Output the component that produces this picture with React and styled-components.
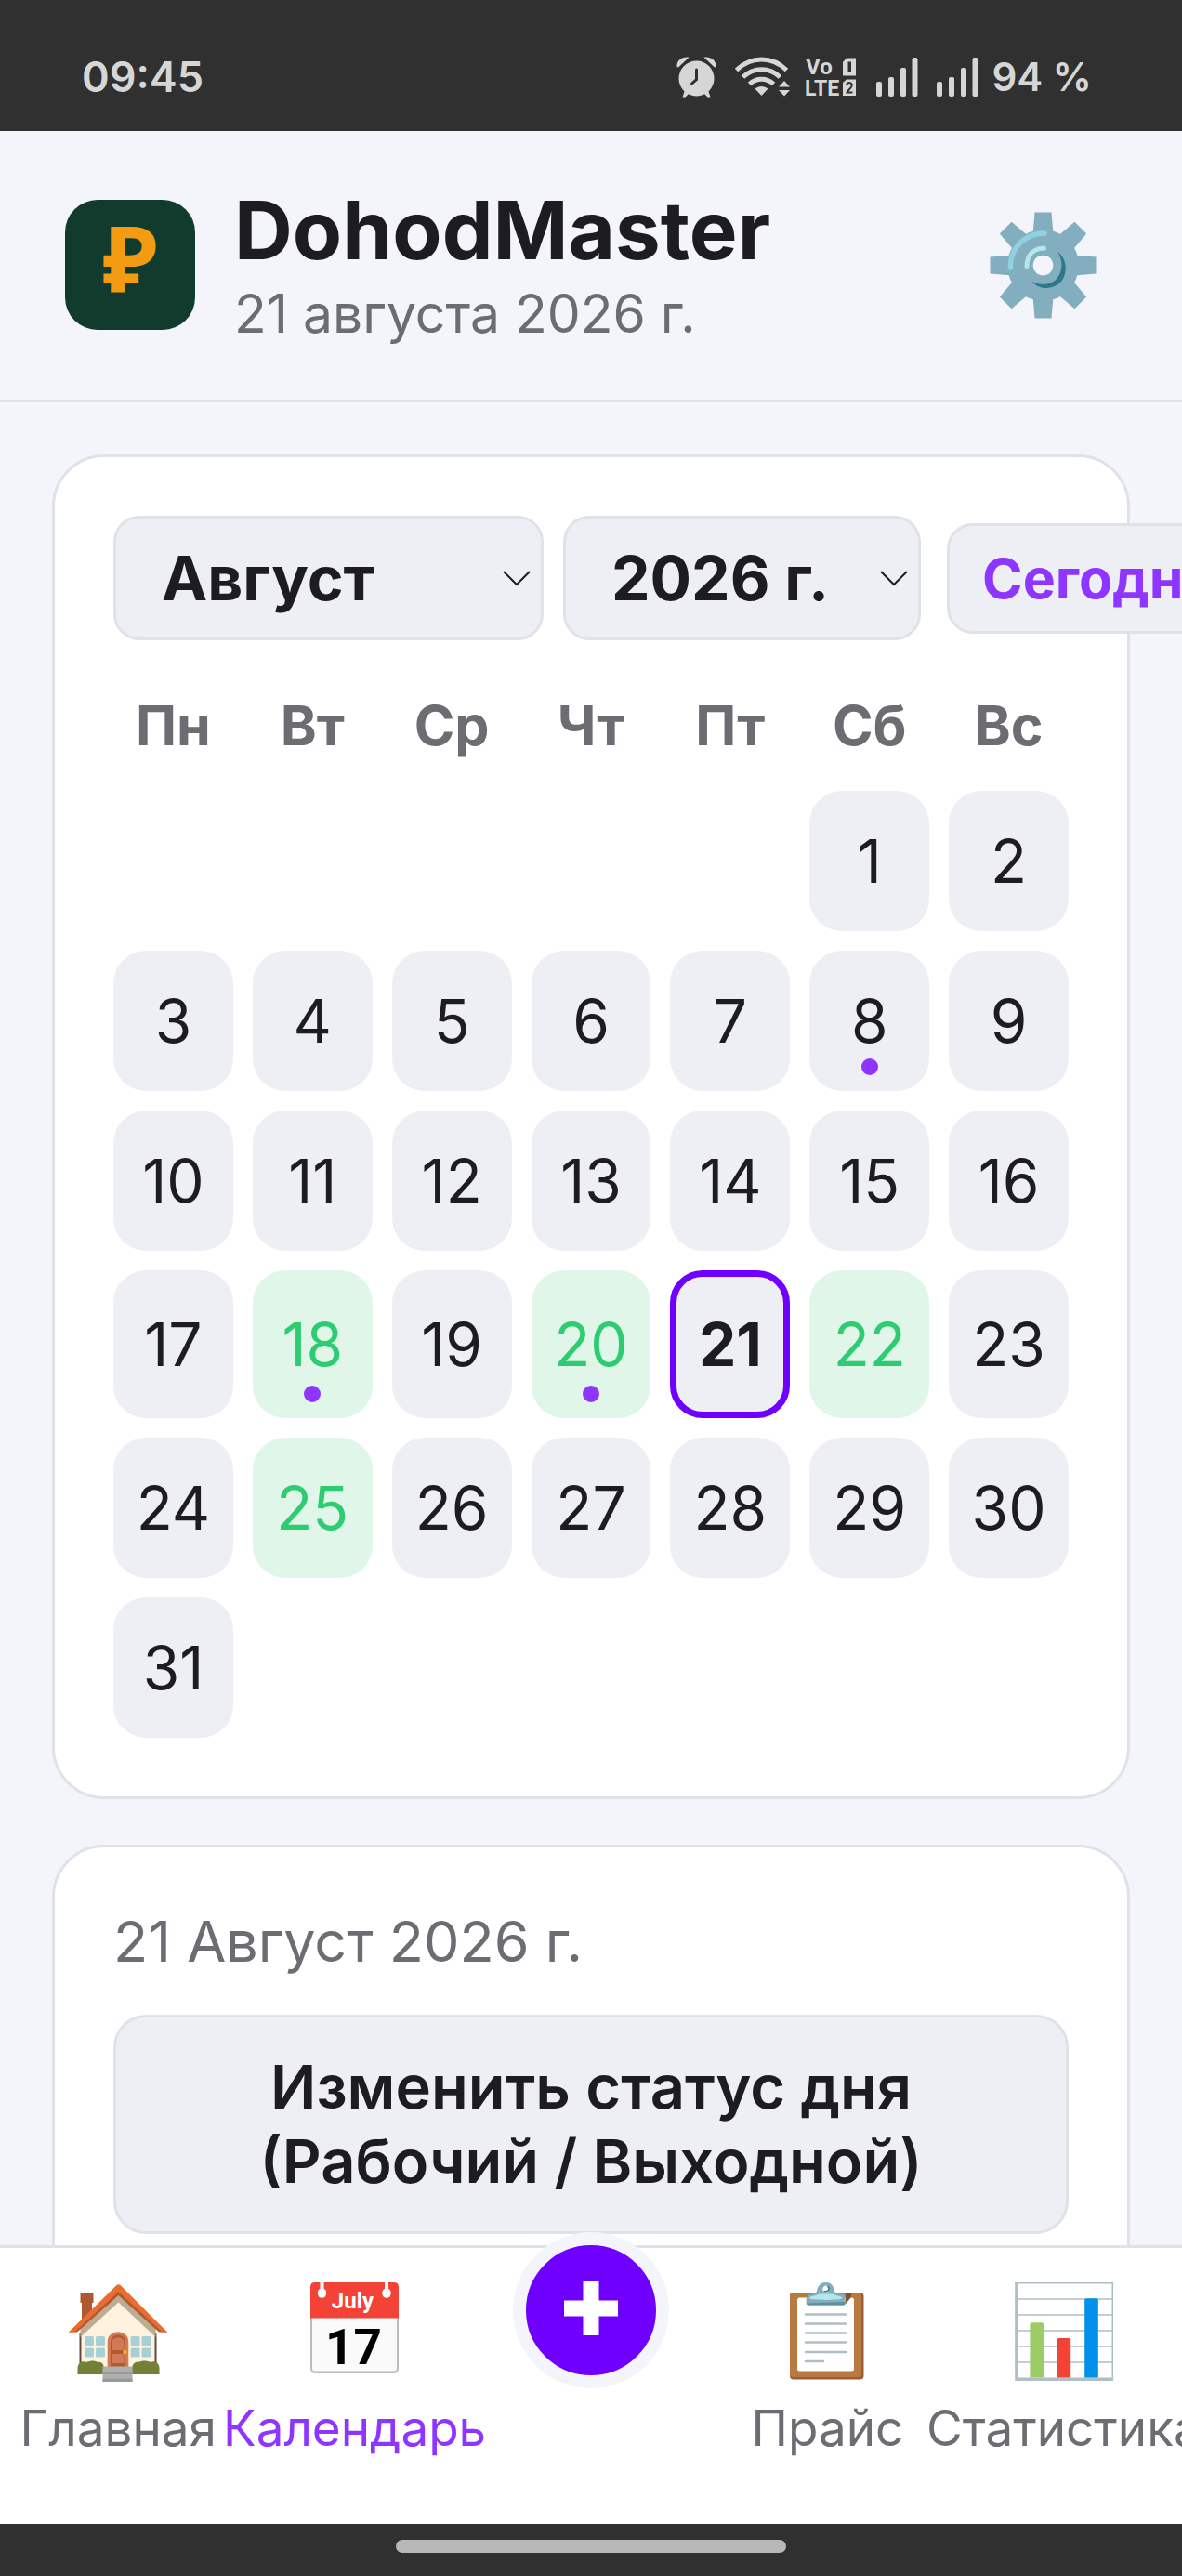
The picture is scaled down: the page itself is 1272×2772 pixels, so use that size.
import React, { useState } from 'react';
import styled, { createGlobalStyle, css } from 'styled-components';

const GlobalStyle = createGlobalStyle`
  * {
    box-sizing: border-box;
  }

  body {
    margin: 0;
    background-color: #f4f5fa;
    color: #1c1c21;
    font-family: Inter, Roboto, 'Liberation Sans', sans-serif;
  }

  button,
  select {
    font-family: inherit;
    color: inherit;
  }

  svg {
    display: block;
    flex: none;
  }
`;

const Screen = styled.div`
  width: 100%;
  height: 100vh;
  display: flex;
  flex-direction: column;
  overflow: hidden;
`;

const StatusBar = styled.div`
  flex: none;
  display: flex;
  justify-content: space-between;
  align-items: center;
  padding: 54px 97px 30px 88px;
  background-color: #303030;
  color: #d6d6d6;

  .time {
    font-size: 45px;
    line-height: 57px;
    font-weight: 600;
  }

  .icons {
    display: flex;
    align-items: center;
    gap: 20px;
  }

  .volte {
    margin-left: -6px;
  }

  .battery {
    font-size: 42px;
    line-height: 57px;
    font-weight: 600;
    margin-left: -6px;
    white-space: nowrap;
  }
`;

const Header = styled.header`
  flex: none;
  display: flex;
  align-items: center;
  gap: 42px;
  padding: 54px 84px 55px 70px;
  border-bottom: 3px solid #e0e2ea;
`;

const Logo = styled.div`
  width: 140px;
  height: 140px;
  flex: none;
  display: flex;
  justify-content: center;
  padding-bottom: 16px;
  border-radius: 35px;
  background-color: #113b2c;
  color: #f39c12;
  font-family: 'Noto Sans', sans-serif;
  font-size: 98px;
  line-height: 124px;
  font-weight: 700;
`;

const Brand = styled.div`
  flex: 1;

  h1 {
    margin: 0;
    font-size: 87px;
    line-height: 105px;
    font-weight: 700;
  }

  p {
    margin: 0;
    font-size: 57px;
    line-height: 75px;
    color: #6c6d72;
  }
`;

const IconButton = styled.button`
  padding: 8px;
  border: none;
  background: none;
  cursor: pointer;
`;

const Main = styled.main`
  flex: 1;
  min-height: 0;
  overflow-x: hidden;
  overflow-y: auto;
  scrollbar-width: none;
  padding: 56px;
`;

const Card = styled.section`
  padding: 63px;
  border: 3px solid #e0e2ea;
  border-radius: 56px;
  background-color: #ffffff;

  & + & {
    margin-top: 49px;
  }
`;

const Toolbar = styled.div`
  display: flex;
  align-items: center;
  gap: 21px;
  margin-bottom: 42px;
`;

const SelectBox = styled.div`
  position: relative;
  flex: none;
  width: ${props => props.$width}px;

  select {
    appearance: none;
    display: block;
    width: 100%;
    height: 134px;
    padding: 0 49px;
    border: 3px solid #e0e2ea;
    border-radius: 28px;
    background-color: #eeeff5;
    font-size: 66px;
    font-weight: 700;
  }

  svg {
    position: absolute;
    right: 14px;
    top: 59px;
    pointer-events: none;
  }
`;

const TodayButton = styled.button`
  flex: none;
  height: 119px;
  margin-left: 7px;
  padding: 0 35px;
  border: 3px solid #e0e2ea;
  border-radius: 28px;
  background-color: #eeeff5;
  color: #8e36ff;
  font-size: 59px;
  font-weight: 700;
  cursor: pointer;
`;

const Week = styled.div`
  display: grid;
  grid-template-columns: repeat(7, 1fr);
  gap: 21px;
  margin-bottom: 21px;
  text-align: center;
  font-size: 59px;
  line-height: 99px;
  font-weight: 700;
  color: #6c6d72;
`;

const Days = styled.div`
  display: grid;
  grid-template-columns: repeat(7, 1fr);
  gap: 21px;
`;

const Day = styled.button`
  position: relative;
  min-width: 0;
  padding: 35px 0;
  border: 3px solid transparent;
  border-radius: 35px;
  background-color: #eeeff5;
  font-size: 64px;
  line-height: 75px;
  cursor: pointer;

  ${props =>
    props.$work &&
    css`
      background-color: #e0f6e9;
      color: #2ecc71;
    `}

  ${props =>
    props.$selected &&
    css`
      border: 7px solid #6f00ff;
      font-weight: 700;
    `}

  ${props =>
    props.$offset &&
    css`
      grid-column-start: ${props.$offset};
    `}
`;

const Dot = styled.span`
  position: absolute;
  left: calc(50% - 9px);
  bottom: 14px;
  width: 18px;
  height: 18px;
  border-radius: 50%;
  background-color: #8e36ff;
`;

const DayTitle = styled.div`
  margin-bottom: 41px;
  font-size: 61px;
  line-height: 76px;
  color: #6c6d72;
`;

const StatusButton = styled.button`
  width: 100%;
  padding: 35px 130px;
  border: 3px solid #e0e2ea;
  border-radius: 35px;
  background-color: #eeeff5;
  font-size: 65px;
  line-height: 80px;
  font-weight: 600;
  cursor: pointer;
`;

const TabBar = styled.nav`
  flex: none;
  display: flex;
  z-index: 1;
  border-top: 3px solid #e0e2ea;
  background-color: #ffffff;
`;

const Tab = styled.a`
  flex: 1 1 0;
  min-width: 0;
  display: flex;
  flex-direction: column;
  align-items: center;
  gap: 8px;
  padding: 31px 0 68px;
  color: ${props => (props.$active ? '#8e36ff' : '#6c6d72')};
  font-size: 53px;
  line-height: 70px;
  white-space: nowrap;
  text-decoration: none;
`;

const AddCell = styled.div`
  flex: 1 1 0;
  display: flex;
  justify-content: center;
  align-items: flex-start;
`;

const AddButton = styled.button`
  width: 168px;
  height: 168px;
  margin-top: -17px;
  padding: 0;
  display: flex;
  justify-content: center;
  align-items: center;
  border: 14px solid #f4f5fa;
  border-radius: 50%;
  background-color: #6f00ff;
  cursor: pointer;
`;

const GestureBar = styled.div`
  flex: none;
  display: flex;
  justify-content: center;
  padding: 17px 0 25px;
  background-color: #303030;

  span {
    width: 33%;
    height: 14px;
    border-radius: 7px;
    background-color: #b8b8b8;
  }
`;

const AlarmIcon = () => (
  <svg width="43" height="44" viewBox="0 0 43 44" fill="#d6d6d6">
    <path d="M0.500 11C0 4 6 -0.500 13.500 0.800L2 11.500ZM42.500 11C43 4 37 -0.500 29.500 0.800L41 11.500Z" />
    <path d="M9 36L6.500 43.500H9.500L14 39ZM34 36L36.500 43.500H33.500L29 39Z" />
    <circle cx="21.500" cy="23.500" r="19" />
    <path
      d="M21.500 14V24.500L16.500 29"
      fill="none"
      stroke="#303030"
      strokeWidth="3"
      strokeLinecap="round"
    />
  </svg>
);

const WifiIcon = () => (
  <svg width="60" height="44" viewBox="0 0 60 44" fill="none">
    <g stroke="#d6d6d6" strokeWidth="5">
      <path d="M1.500 14.500C17 -0.800 40 -0.800 55.500 14.500" />
      <path d="M8.500 22C20 11 37 11 48.500 22" />
      <path d="M15.500 29.500C23 22.500 34 22.500 41.500 29.500" />
    </g>
    <g fill="#d6d6d6">
      <path d="M21.500 34.500C26 31 31 31 35.500 34.500L28.500 42Z" />
      <path d="M47 32.500L53 26L59 32.500ZM47 36L53 42.500L59 36Z" />
    </g>
  </svg>
);

const VolteIcon = () => (
  <svg className="volte" width="58" height="56" viewBox="-2 -7 58 56" fill="#d6d6d6">
    <g fontFamily="Roboto, sans-serif" fontWeight="700">
      <text x="0" y="18" fontSize="24">
        Vo
      </text>
      <text x="-1" y="41" fontSize="23">
        LTE
      </text>
    </g>
    <path d="M44 0.500H54V19.500H40V5Z" />
    <path d="M44 23.500H54V41H40V27Z" />
    <rect x="45.500" y="4.500" width="3.500" height="11" fill="#303030" />
    <path
      d="M44 29.500C45 26 50 26.500 49.800 30C49.500 33 45 35 44.500 37.500H50.500"
      fill="none"
      stroke="#303030"
      strokeWidth="2"
    />
  </svg>
);

const SignalIcon = () => (
  <svg width="45" height="42" viewBox="0 0 45 42" fill="#d6d6d6">
    <rect x="0" y="26" width="6" height="16" rx="2" />
    <rect x="13" y="21" width="6" height="21" rx="2" />
    <rect x="26" y="11" width="6" height="31" rx="2" />
    <rect x="38.500" y="0" width="6" height="42" rx="2" />
  </svg>
);

const GearIcon = () => (
  <svg width="115" height="115" viewBox="0 0 115 115">
    <g fill="#82aec0">
      {[0, 45, 90, 135, 180, 225, 270, 315].map(angle => (
        <path
          key={angle}
          d="M48.500 0.500H66.500L68.500 24H46.500Z"
          transform={`rotate(${angle} 57.500 57.500)`}
        />
      ))}
      <circle cx="57.500" cy="57.500" r="38.500" />
    </g>
    <g fill="none" strokeLinecap="round">
      <path d="M22.500 60C21.500 39 38 23.500 59 23" stroke="#90d1e1" strokeWidth="5.500" />
      <path d="M40 58.500C40 46 47.500 39.500 58.500 39" stroke="#b5e6eb" strokeWidth="5" />
    </g>
    <path
      d="M73.400 43C86 52 86 80 62 82C55 82.500 49 79 45.400 74.700C54 79.500 66 79 72 72C79 64 79 53 73.400 43Z"
      fill="#2f7889"
    />
    <circle cx="57.500" cy="57.500" r="10.800" fill="#f4f5fa" />
  </svg>
);

const HomeIcon = () => (
  <svg width="120" height="120" viewBox="0 0 120 120">
    <path d="M19.500 17H33.500V28H32V50H21V28H19.500Z" fill="#ad5a33" />
    <path d="M19.500 58L60.500 18L100.600 58V105H19.500Z" fill="#fff3e0" />
    <path d="M19.500 60V98M100.500 60V98" stroke="#5d4a42" strokeWidth="2" />
    <path d="M19.500 65V54L60.500 14L100.600 54V65L60.500 27.500Z" fill="#bfab92" />
    <path d="M7 59.500L60.500 12L113 59.500H104L60.500 20L16 59.500Z" fill="#ad5a33" />
    <path d="M7 59.500L58 9.500Q60.500 7 63 9.500L113 59.500H107.500L60.500 16L13 59.500Z" fill="#ec6c30" />
    <g fill="#a6d0d6">
      <rect x="24" y="64" width="10" height="10" rx="1.500" />
      <rect x="36" y="64" width="10" height="10" rx="1.500" />
      <rect x="24" y="76.500" width="10" height="10" rx="1.500" />
      <rect x="36" y="76.500" width="10" height="10" rx="1.500" />
      <rect x="73.500" y="64" width="10" height="10" rx="1.500" />
      <rect x="85.500" y="64" width="10" height="10" rx="1.500" />
      <rect x="73.500" y="76.500" width="10" height="10" rx="1.500" />
      <rect x="85.500" y="76.500" width="10" height="10" rx="1.500" />
    </g>
    <path d="M48.700 97V70C48.700 55.500 71.300 55.500 71.300 70V97Z" fill="#d27855" />
    <path d="M52 97V71C52 59.500 68 59.500 68 71V97Z" fill="#ad5a33" />
    <path d="M53.500 79V70C54 63.500 66 63.500 66.500 70V79ZM53.500 83H66.500V93H53.500Z" fill="#d27855" />
    <circle cx="67.400" cy="81" r="2.200" fill="#ffb300" />
    <path
      d="M16.500 105V98C17 92 22 90 26 92C31 90 35 90 38 92C43 91 45 95 45 99V105ZM75 105V99C75.500 93 79 91 82 92C86 90 91 90 95 92C100 90 104 93 104.500 98V105Z"
      fill="#728137"
    />
    <path d="M43.500 96.500H75.500V113H43.500Z" fill="#b0b0b0" />
    <path d="M43.500 102H75.500V105H43.500ZM43.500 109.500H75.500V113H43.500Z" fill="#999999" />
  </svg>
);

const CalendarIcon = () => (
  <svg width="120" height="120" viewBox="0 0 120 120">
    <rect x="12" y="20" width="95" height="84" rx="5" fill="#bcbcbc" />
    <rect x="14" y="20" width="91" height="81.500" rx="3" fill="#fafafa" />
    <path d="M12 44.500V11Q12 6 17 6H102Q107 6 107 11V44.500Z" fill="#f44336" />
    <g fill="#ffffff">
      <path d="M22.500 6H26.500V13H22.500ZM92 6H96V13H92Z" />
      <ellipse cx="24.500" cy="17.500" rx="4.800" ry="5.200" />
      <ellipse cx="94" cy="17.500" rx="4.800" ry="5.200" />
    </g>
    <g fontFamily="Roboto, sans-serif" textAnchor="middle">
      <text x="57.500" y="33.500" fontSize="24" fontWeight="700" fill="#ffffff">
        July
      </text>
      <text x="58.500" y="93.500" fontSize="53" fontWeight="700" fill="#000000">
        17
      </text>
    </g>
  </svg>
);

const ClipboardIcon = () => (
  <svg width="120" height="120" viewBox="0 0 120 120">
    <rect x="20" y="17" width="79.500" height="93.500" rx="4" fill="#9f5c36" />
    <rect x="20" y="17" width="77" height="91" rx="4" fill="#b97a41" />
    <rect x="28" y="22.500" width="61" height="79" rx="2.500" fill="#ffffff" />
    <path
      d="M37 40.500H80M37 50.500H80M37 60.500H80M37 70.500H80M37 81H80M37 91H56"
      stroke="#b0bec5"
      strokeWidth="2.600"
      strokeLinecap="round"
    />
    <path d="M80 17V29L86 22V17Z" fill="#8a4e2f" />
    <path
      fillRule="evenodd"
      d="M37.600 28V24C37.600 20 43 18.500 48 18C50 12 51 6 58.700 6C66.500 6 67 12 69 18C74 18.500 79.800 18 79.800 22V28Q79.800 30.500 77.500 30.500H40Q37.600 30.500 37.600 28ZM58.700 9.500A3.500 4 0 1 0 58.800 9.500Z"
      fill="#82aec0"
    />
    <path d="M41 23C42 20.500 47 21 51.500 18.500H66C70 21 75 20 76.500 23C76.500 25.500 41 25.500 41 23Z" fill="#b5e6eb" />
    <path d="M38 28.500Q38 30.500 40 30.500H77.500Q80 30.500 79.800 27Z" fill="#5c8fa3" />
    <path d="M56.500 15.500C61 17 64 13 60.500 10" fill="none" stroke="#2f7889" strokeWidth="1.500" />
  </svg>
);

const ChartIcon = () => (
  <svg width="120" height="120" viewBox="0 0 120 120">
    <path
      d="M7 6.800H113M7 24H113M7 41H113M7 58H113M7 75H113M7 92H113M112.300 6V112"
      stroke="#b0bec5"
      strokeWidth="1.600"
    />
    <path d="M9 6V110.200H113" fill="none" stroke="#b0bec5" strokeWidth="3.600" />
    <path d="M23.400 108.500V51Q23.400 49.300 25 49.300H36.500Q38 49.300 38 51V108.500Z" fill="#9ccc65" />
    <path d="M52.600 108.500V68Q52.600 66 54.500 66H65.500Q67.200 66 67.200 68V108.500Z" fill="#f44336" />
    <path d="M82.200 108.500V25Q82.200 23.300 84 23.300H95Q96.800 23.300 96.800 25V108.500Z" fill="#0091ea" />
  </svg>
);

const Chevron = () => (
  <svg width="30" height="17" viewBox="0 0 30 17">
    <path d="M1 1L15 15L29 1" fill="none" stroke="#1c1c21" strokeWidth="2" />
  </svg>
);

const PlusIcon = () => (
  <svg width="58" height="62" viewBox="0 0 58 62">
    <path d="M20.500 0H37.500V20.500H58V37.500H37.500V58H20.500V37.500H0V20.500H20.500Z" fill="#ffffff" />
  </svg>
);

const months = [
  'Январь',
  'Февраль',
  'Март',
  'Апрель',
  'Май',
  'Июнь',
  'Июль',
  'Август',
  'Сентябрь',
  'Октябрь',
  'Ноябрь',
  'Декабрь',
];
const years = [2024, 2025, 2026, 2027];
const weekDays = ['Пн', 'Вт', 'Ср', 'Чт', 'Пт', 'Сб', 'Вс'];
const days = Array.from({ length: 31 }, (_, i) => i + 1);
const workDays = [18, 20, 22, 25];
const markedDays = [8, 18, 20];
const firstDayColumn = 6;

function App() {
  const [month, setMonth] = useState('Август');
  const [year, setYear] = useState(2026);
  const [selected, setSelected] = useState(21);

  const goToday = () => {
    setMonth('Август');
    setYear(2026);
    setSelected(21);
  };

  return (
    <Screen>
      <GlobalStyle />
      <StatusBar>
        <div className="time">09:45</div>
        <div className="icons">
          <AlarmIcon />
          <WifiIcon />
          <VolteIcon />
          <SignalIcon />
          <SignalIcon />
          <div className="battery">94 %</div>
        </div>
      </StatusBar>

      <Header>
        <Logo>₽</Logo>
        <Brand>
          <h1>DohodMaster</h1>
          <p>21 августа 2026 г.</p>
        </Brand>
        <IconButton type="button" aria-label="Настройки">
          <GearIcon />
        </IconButton>
      </Header>

      <Main>
        <Card>
          <Toolbar>
            <SelectBox $width={463}>
              <select
                aria-label="Месяц"
                value={month}
                onChange={e => setMonth(e.target.value)}
              >
                {months.map(name => (
                  <option key={name} value={name}>
                    {name}
                  </option>
                ))}
              </select>
              <Chevron />
            </SelectBox>
            <SelectBox $width={385}>
              <select
                aria-label="Год"
                value={year}
                onChange={e => setYear(Number(e.target.value))}
              >
                {years.map(value => (
                  <option key={value} value={value}>
                    {value} г.
                  </option>
                ))}
              </select>
              <Chevron />
            </SelectBox>
            <TodayButton type="button" onClick={goToday}>
              Сегодня
            </TodayButton>
          </Toolbar>
          <Week>
            {weekDays.map(name => (
              <span key={name}>{name}</span>
            ))}
          </Week>
          <Days>
            {days.map(day => (
              <Day
                key={day}
                type="button"
                $offset={day === 1 ? firstDayColumn : null}
                $work={workDays.includes(day)}
                $selected={day === selected}
                onClick={() => setSelected(day)}
              >
                {day}
                {markedDays.includes(day) && <Dot />}
              </Day>
            ))}
          </Days>
        </Card>

        <Card>
          <DayTitle>
            {selected} {month} {year} г.
          </DayTitle>
          <StatusButton type="button">
            Изменить статус дня (Рабочий / Выходной)
          </StatusButton>
        </Card>
      </Main>

      <TabBar>
        <Tab href="#home">
          <HomeIcon />
          Главная
        </Tab>
        <Tab href="#calendar" $active>
          <CalendarIcon />
          Календарь
        </Tab>
        <AddCell>
          <AddButton type="button" aria-label="Добавить">
            <PlusIcon />
          </AddButton>
        </AddCell>
        <Tab href="#price">
          <ClipboardIcon />
          Прайс
        </Tab>
        <Tab href="#stats">
          <ChartIcon />
          Статистика
        </Tab>
      </TabBar>
      <GestureBar>
        <span />
      </GestureBar>
    </Screen>
  );
}

export default App;
